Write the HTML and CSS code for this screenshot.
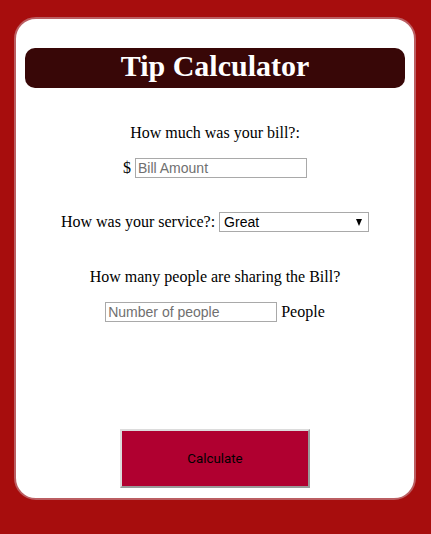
FILE: index.html
```html
<!DOCTYPE html>
<html>
<head>
<meta charset="utf-8">
<link rel="stylesheet" href="styles.css">
</head>
<body>
<div class="card">
  <h1 class="title">Tip Calculator</h1>
  <p class="question q-bill">How much was your bill?:</p>
  <div class="row row-bill">$ <input class="field" type="text" placeholder="Bill Amount"></div>
  <div class="row row-service">How was your service?: <span class="select"><span>Great</span><span class="arrow"></span></span></div>
  <p class="question q-people">How many people are sharing the Bill?</p>
  <div class="row row-people"><input class="field" type="text" placeholder="Number of people"> People</div>
  <div class="actions"><button class="calc">Calculate</button></div>
</div>
</body>
</html>
```

FILE: styles.css
```css
html, body {
  margin: 0;
  padding: 0;
  background: #a70d0d;
  font-family: "Liberation Serif", "Times New Roman", serif;
  font-size: 16px;
  color: #000;
}
body {
  padding: 17px 15px 0 14px;
  height: 534px;
  box-sizing: border-box;
}
.card {
  background: #fff;
  border: 2px solid #bb5e62;
  border-radius: 22px;
  padding: 29px 9px 10px;
  text-align: center;
}
.title {
  margin: 0;
  height: 40px;
  line-height: 35px;
  background: #380707;
  color: #fff;
  border-radius: 10px;
  font-size: 30px;
  font-weight: bold;
}
.question {
  margin: 0;
  line-height: 18px;
}
.q-bill { margin-top: 36px; }
.q-people { margin-top: 36px; }
.row {
  display: flex;
  justify-content: center;
  align-items: center;
  height: 20px;
  white-space: pre;
}
.row-bill { margin-top: 16px; }
.row-service { margin-top: 34px; }
.row-people { margin-top: 16px; }
.field {
  box-sizing: border-box;
  width: 172px;
  height: 20px;
  border: 1px solid #a9a9a9;
  padding: 1px 2px;
  margin: 0;
  font-family: "Liberation Sans", Arial, sans-serif;
  font-size: 14px;
  color: #000;
  outline: none;
}
.field::placeholder { color: #707070; }
.select {
  box-sizing: border-box;
  width: 150px;
  height: 20px;
  border: 1px solid #a9a9a9;
  display: flex;
  align-items: center;
  justify-content: space-between;
  padding: 0 6px 0 4px;
  font-family: "Liberation Sans", Arial, sans-serif;
  font-size: 14px;
  text-align: left;
}
.arrow {
  width: 0;
  height: 0;
  border-left: 3.5px solid transparent;
  border-right: 3.5px solid transparent;
  border-top: 7px solid #000;
}
.actions {
  margin-top: 107px;
  display: flex;
  justify-content: center;
}
.calc {
  box-sizing: border-box;
  width: 190px;
  height: 59px;
  background: #b00030;
  border: 2px solid;
  border-color: #dcdcdc #9a9a9a #9a9a9a #dcdcdc;
  font-family: Roboto, "Liberation Sans", Arial, sans-serif;
  font-size: 13.333px;
  color: #000;
  padding: 0;
  margin: 0;
}
```
